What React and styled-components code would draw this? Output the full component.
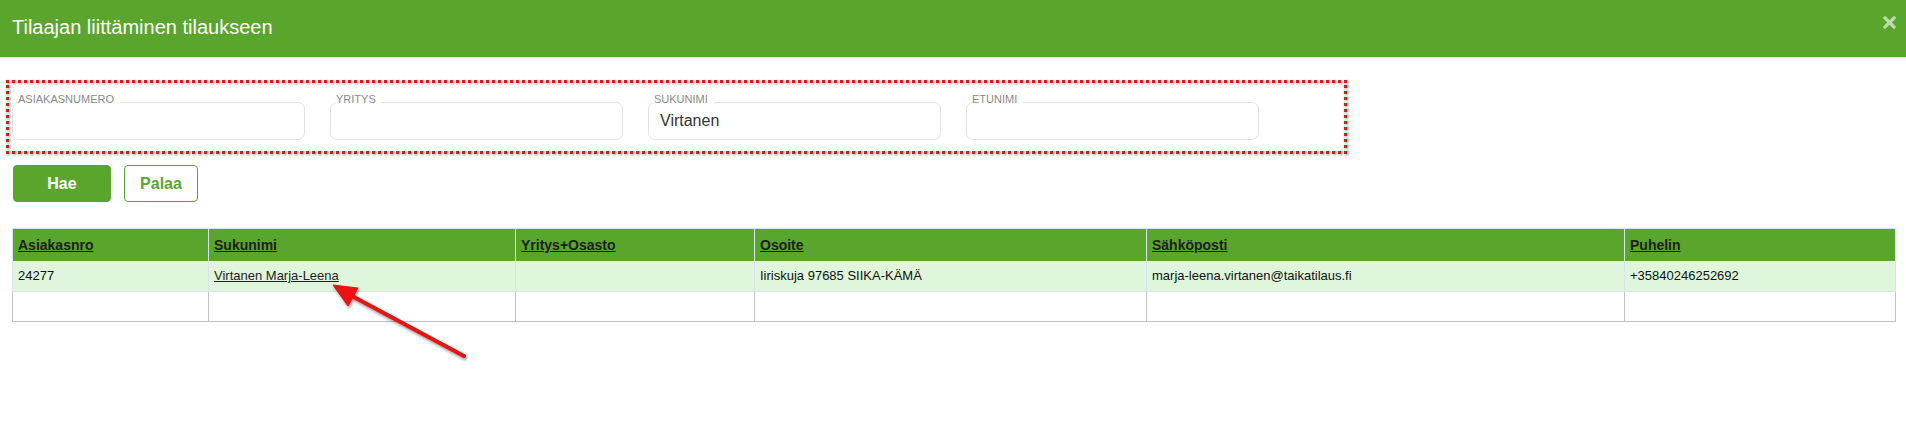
import React from "react"
import styled, { createGlobalStyle } from "styled-components"

const GREEN = "#5aa52c"

const GlobalStyle = createGlobalStyle`
  html, body {
    margin: 0;
    padding: 0;
    background: #ffffff;
    font-family: "Liberation Sans", Arial, sans-serif;
  }
`

const fields = [
  { label: "ASIAKASNUMERO", value: "" },
  { label: "YRITYS", value: "" },
  { label: "SUKUNIMI", value: "Virtanen" },
  { label: "ETUNIMI", value: "" },
]

const columns = [
  { title: "Asiakasnro", width: 196 },
  { title: "Sukunimi", width: 307 },
  { title: "Yritys+Osasto", width: 239 },
  { title: "Osoite", width: 392 },
  { title: "Sähköposti", width: 478 },
  { title: "Puhelin", width: 271 },
]

const rows = [
  ["24277", "Virtanen Marja-Leena", "", "Iiriskuja 97685 SIIKA-KÄMÄ", "marja-leena.virtanen@taikatilaus.fi", "+35840246252692"],
  ["", "", "", "", "", ""],
]

export default function App() {
  return (
    <Page>
      <GlobalStyle />
      <Header>
        <Title>Tilaajan liittäminen tilaukseen</Title>
        <CloseButton aria-label="Sulje">
          <svg width="13" height="13" viewBox="0 0 13 13">
            <path d="M2 2 L11 11 M11 2 L2 11" stroke="currentColor" strokeWidth="3.2" strokeLinecap="square" />
          </svg>
        </CloseButton>
      </Header>

      <Content>
        <SearchBox>
          {fields.map((f) => (
            <Field key={f.label}>
              <Legend>{f.label}</Legend>
              <Input defaultValue={f.value} />
            </Field>
          ))}
        </SearchBox>

        <ButtonRow>
          <Button $primary $width={98}>Hae</Button>
          <Button $width={74}>Palaa</Button>
        </ButtonRow>

        <Table>
          <colgroup>
            {columns.map((c) => (
              <col key={c.title} style={{ width: c.width }} />
            ))}
          </colgroup>
          <thead>
            <HeadRow>
              {columns.map((c) => (
                <HeadCell key={c.title}>
                  <HeadLink href="#">{c.title}</HeadLink>
                </HeadCell>
              ))}
            </HeadRow>
          </thead>
          <tbody>
            {rows.map((r, i) => (
              <Row key={i} $selected={i === 0}>
                {r.map((v, j) => (
                  <Cell key={j} $selected={i === 0}>
                    {j === 1 && v ? <NameLink href="#">{v}</NameLink> : v}
                  </Cell>
                ))}
              </Row>
            ))}
          </tbody>
        </Table>
      </Content>

      <Arrow width="1906" height="436" viewBox="0 0 1906 436">
        <g fill="#ee1111" stroke="#ee1111">
          <line x1="464" y1="356" x2="352" y2="296" strokeWidth="4" strokeLinecap="round" />
          <polygon points="333,285 358,288 348,306" strokeWidth="1" strokeLinejoin="round" />
        </g>
      </Arrow>
    </Page>
  )
}

const Page = styled.div`
  position: relative;
  width: 1906px;
  height: 436px;
  overflow: hidden;
`

const Header = styled.div`
  height: 57px;
  background: ${GREEN};
  border-bottom: 1px solid #e6e6e6;
  display: flex;
  align-items: center;
  justify-content: space-between;
  padding: 0 10px 0 12px;
`

const Title = styled.h1`
  margin: 0;
  margin-top: -3px;
  font-size: 20px;
  font-weight: normal;
  color: #ffffff;
`

const CloseButton = styled.button`
  border: none;
  background: none;
  padding: 0;
  margin-top: -12px;
  color: rgba(255, 255, 255, 0.6);
  display: flex;
  cursor: pointer;
`

const Content = styled.div`
  padding: 0 11px 0 12px;
`

const SearchBox = styled.div`
  position: relative;
  margin: 22px 0 0 -6px;
  width: 1341px;
  height: 74px;
  box-sizing: border-box;
  padding: 14px 0 0 6px;
  display: flex;
  gap: 25px;

  &::before {
    content: "";
    position: absolute;
    inset: 0;
    border: 3px dotted #ee1111;
    filter: drop-shadow(1px 1px 1.5px rgba(0, 0, 0, 0.45));
    pointer-events: none;
  }
`

const Field = styled.fieldset`
  margin: 0;
  padding: 0 0 0 5px;
  width: 293px;
  height: 46px;
  box-sizing: border-box;
  border: 1px solid #e0e2e6;
  border-radius: 7px;
`

const Legend = styled.legend`
  padding: 0 6px 5px 0;
  font-size: 11px;
  line-height: 11px;
  color: #8a8a8a;
`

const Input = styled.input`
  display: block;
  margin-top: -8px;
  width: 100%;
  height: 37px;
  box-sizing: border-box;
  border: none;
  outline: none;
  background: transparent;
  padding: 0 0 0 6px;
  font-family: "Liberation Sans", Arial, sans-serif;
  font-size: 16px;
  color: #333333;
`

const ButtonRow = styled.div`
  display: flex;
  gap: 13px;
  margin-top: 11px;
  padding-left: 1px;
`

const Button = styled.button`
  width: ${(p) => p.$width}px;
  height: 37px;
  box-sizing: border-box;
  border-radius: 4px;
  border: 1px solid ${GREEN};
  background: ${(p) => (p.$primary ? GREEN : "#ffffff")};
  color: ${(p) => (p.$primary ? "#ffffff" : GREEN)};
  font-family: "Liberation Sans", Arial, sans-serif;
  font-size: 16px;
  font-weight: bold;
  cursor: pointer;
`

const Table = styled.table`
  margin-top: 26px;
  width: 1883px;
  table-layout: fixed;
  border-collapse: collapse;
  font-size: 13px;
  color: #111111;
`

const HeadRow = styled.tr`
  height: 32px;
  background: ${GREEN};
  border-top: 1px solid #d6e4f2;
`

const HeadCell = styled.th`
  text-align: left;
  padding: 0 5px;
  border-left: 1px solid #d8e4ee;
  border-right: 1px solid #d8e4ee;
`

const HeadLink = styled.a`
  font-size: 14px;
  font-weight: bold;
  color: #1e1e1e;
  text-decoration: underline;
`

const Row = styled.tr`
  height: ${(p) => (p.$selected ? 31 : 30)}px;
  background: ${(p) => (p.$selected ? "#dff6dc" : "#ffffff")};
  border-bottom: 1px solid ${(p) => (p.$selected ? "#d6e4f2" : "#bfbfbf")};
`

const Cell = styled.td`
  padding: 0 5px;
  border-left: 1px solid ${(p) => (p.$selected ? "#d8e4ee" : "#c4c4c4")};
  border-right: 1px solid ${(p) => (p.$selected ? "#d8e4ee" : "#c4c4c4")};
`

const NameLink = styled.a`
  color: #1e1e1e;
  text-decoration: underline;
`

const Arrow = styled.svg`
  position: absolute;
  left: 0;
  top: 0;
  pointer-events: none;
  filter: drop-shadow(1px 2px 1.5px rgba(0, 0, 0, 0.4));
`
